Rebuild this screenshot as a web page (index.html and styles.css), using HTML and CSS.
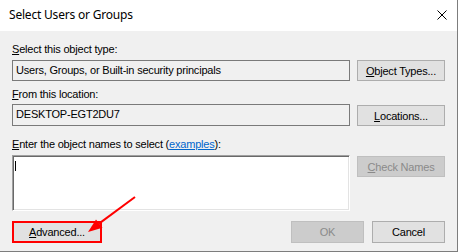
FILE: index.html
```html
<!DOCTYPE html>
<html>
<head>
<meta charset="utf-8">
<link rel="stylesheet" href="styles.css">
</head>
<body>
<div class="window">
  <div class="titlebar">
    <span class="title">Select Users or Groups</span>
    <svg class="close" width="10" height="10" viewBox="0 0 10 10"><path d="M0.5 0.5 L9.5 9.5 M9.5 0.5 L0.5 9.5" stroke="#000" stroke-width="1" fill="none"/></svg>
  </div>
  <div class="content">
    <div class="label l1"><u>S</u>elect this object type:</div>
    <div class="row r1">
      <div class="field">Users, Groups, or Built-in security principals</div>
      <div class="btn"><u>O</u>bject Types...</div>
    </div>
    <div class="label l2"><u>F</u>rom this location:</div>
    <div class="row r2">
      <div class="field f2">DESKTOP-EGT2DU7</div>
      <div class="btn b2"><u>L</u>ocations...</div>
    </div>
    <div class="label l3"><u>E</u>nter the object names to select (<span class="link">examples</span>):</div>
    <div class="row r3">
      <div class="textarea"><span class="caret"></span></div>
      <div class="btn disabled b3"><u>C</u>heck Names</div>
    </div>
    <div class="footer">
      <div class="btn advanced"><u>A</u>dvanced...</div>
      <div class="spacer"></div>
      <div class="btn disabled ok">OK</div>
      <div class="btn cancel">Cancel</div>
    </div>
  </div>
  <svg class="arrow" width="458" height="252" viewBox="0 0 458 252">
    <line x1="135" y1="197" x2="99" y2="223.6" stroke="#ff0000" stroke-width="2"/>
    <polygon points="88,232 102.5,227.8 96,219.4" fill="#ff0000"/>
  </svg>
</div>
</body>
</html>
```

FILE: styles.css
```css
html, body {
  margin: 0;
  padding: 0;
  background: #f0f0f0;
}
.window {
  position: relative;
  width: 458px;
  height: 252px;
  box-sizing: border-box;
  border-right: 1px solid #7d7d7d;
  border-bottom: 1px solid #7d7d7d;
  background: #f0f0f0;
  font-family: "Liberation Sans", Arial, sans-serif;
  font-size: 11px;
  letter-spacing: -0.2px;
  color: #000;
  overflow: hidden;
}
.titlebar {
  display: flex;
  align-items: flex-start;
  height: 31px;
  background: #fff;
}
.title {
  margin-top: 7px;
  margin-left: 9px;
  font-family: "Segoe UI", "Noto Sans", sans-serif;
  font-size: 12px;
  letter-spacing: -0.2px;
  line-height: 16px;
  color: #000;
}
.close {
  margin-left: auto;
  margin-right: 10px;
  margin-top: 10px;
}
.content {
  padding: 0 12px;
}
.label {
  line-height: 13px;
  height: 13px;
  white-space: nowrap;
}
.l1 { margin-top: 12px; }
.l2 { margin-top: 7px; }
.l3 { margin-top: 12px; }
.row {
  display: flex;
  gap: 7px;
  align-items: flex-start;
}
.r1 { margin-top: 4px; }
.r2 { margin-top: 3px; }
.r3 { margin-top: 4px; }
.field {
  width: 338px;
  height: 21px;
  box-sizing: border-box;
  border: 1px solid #7a7a7a;
  padding: 3px 0 0 3px;
  line-height: 13px;
  white-space: nowrap;
  background: #f0f0f0;
}
.f2 { height: 22px; }
.btn {
  width: 88px;
  height: 21px;
  box-sizing: border-box;
  border: 1px solid #adadad;
  background: #e1e1e1;
  display: flex;
  align-items: center;
  justify-content: center;
  line-height: 13px;
  padding-top: 1px;
  white-space: nowrap;
}
.b2, .b3 { margin-top: 1px; }
.disabled {
  background: #cccccc;
  border-color: #bfbfbf;
  color: #8a8a8a;
}
.textarea {
  width: 338px;
  height: 56px;
  box-sizing: border-box;
  background: #fff;
  border: 1px solid;
  border-color: #a0a0a0 #ffffff #ffffff #a0a0a0;
  box-shadow: inset 1px 1px 0 #696969, inset -1px -1px 0 #e3e3e3;
  padding: 5px 0 0 2px;
}
.caret {
  display: block;
  width: 1px;
  height: 10px;
  background: #000;
}
.link {
  color: #0066cc;
  text-decoration: underline;
}
.footer {
  display: flex;
  align-items: flex-start;
  margin-top: 10px;
  height: 22px;
}
.spacer { flex: 1; }
.advanced {
  width: 90px;
  height: 22px;
  border: 2px solid #ff0000;
}
.ok, .cancel {
  width: 73px;
  height: 22px;
}
.cancel { margin-left: 8px; }
.arrow {
  position: absolute;
  left: 0;
  top: 0;
  pointer-events: none;
}
```
